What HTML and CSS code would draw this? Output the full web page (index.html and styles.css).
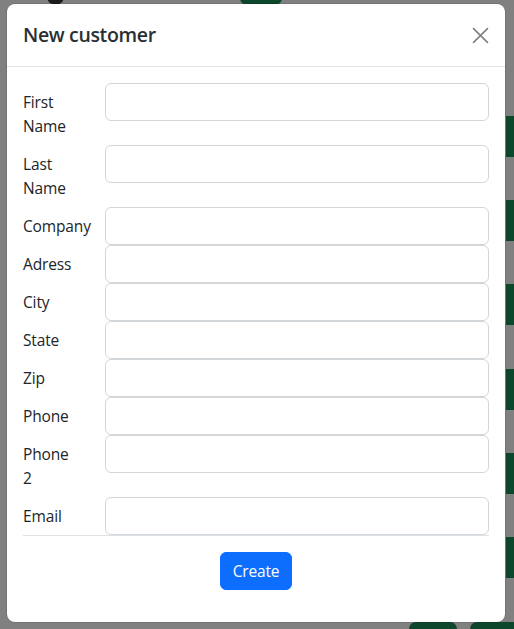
FILE: index.html
```html
<!DOCTYPE html>
<html lang="en">
<head>
<meta charset="utf-8">
<title>New customer</title>
<link rel="stylesheet" href="styles.css">
</head>
<body>
<div class="page-behind" aria-hidden="true">
  <span class="bg-avatar"></span>
  <span class="bg-pill"></span>
  <span class="bg-side s1"></span>
  <span class="bg-side s2"></span>
  <span class="bg-side s3"></span>
  <span class="bg-side s4"></span>
  <span class="bg-side s5"></span>
  <span class="bg-side s6"></span>
  <span class="bg-btn b1"></span>
  <span class="bg-btn b2"></span>
</div>

<div class="modal">
  <div class="modal-header">
    <h5 class="modal-title">New customer</h5>
    <button class="btn-close" type="button" aria-label="Close">
      <svg width="17" height="17" viewBox="0 0 16 16"><path d="M1 1L15 15M15 1L1 15" stroke="currentColor" stroke-width="1.5" fill="none"/></svg>
    </button>
  </div>
  <div class="modal-body">
    <form class="form-grid">
      <label class="form-label">First Name</label><input class="form-control" type="text">
      <label class="form-label">Last Name</label><input class="form-control" type="text">
      <label class="form-label">Company</label><input class="form-control" type="text">
      <label class="form-label">Adress</label><input class="form-control" type="text">
      <label class="form-label">City</label><input class="form-control" type="text">
      <label class="form-label">State</label><input class="form-control" type="text">
      <label class="form-label">Zip</label><input class="form-control" type="text">
      <label class="form-label">Phone</label><input class="form-control" type="text">
      <label class="form-label">Phone 2</label><input class="form-control" type="text">
      <label class="form-label">Email</label><input class="form-control" type="text">
    </form>
    <div class="actions">
      <button class="btn-primary" type="button">Create</button>
    </div>
  </div>
</div>
</body>
</html>
```

FILE: styles.css
```css
* { box-sizing: border-box; }

html, body {
  margin: 0;
  padding: 0;
}

body {
  width: 514px;
  height: 629px;
  overflow: hidden;
  background: #808080;
  font-family: "Open Sans", "Noto Sans", "Liberation Sans", sans-serif;
  font-size: 15.5px;
  letter-spacing: -0.15px;
  line-height: 24px;
  color: #212529;
  position: relative;
  padding-top: 4px;
}

/* page content seen through the backdrop */
.page-behind span { position: absolute; display: block; }
.bg-avatar {
  left: 47px; top: -12px; width: 17px; height: 17px;
  border-radius: 50%; background: #1b1b1b;
}
.bg-pill {
  left: 240px; top: -10px; width: 42px; height: 15px;
  border-radius: 7px; background: #0c462b;
}
.bg-side {
  left: 506px; width: 20px; height: 41px;
  background: #0c462b;
}
.s1 { top: 116px; }
.s2 { top: 200px; }
.s3 { top: 284px; }
.s4 { top: 369px; }
.s5 { top: 453px; }
.s6 { top: 537px; }
.bg-btn {
  top: 622px; height: 30px;
  background: #0c462b; border-radius: 7px;
}
.b1 { left: 409px; width: 48px; }
.b2 { left: 470px; width: 60px; }

/* modal */
.modal {
  position: relative;
  width: 498px;
  margin-left: 7px;
  background: #fff;
  border-radius: 8px;
  box-shadow: 0 0 0 1px rgba(0, 0, 0, 0.1);
}

.modal-header {
  display: flex;
  align-items: center;
  justify-content: space-between;
  padding: 16px;
  border-bottom: 1px solid #dee2e6;
}

.modal-title {
  margin: 0;
  font-size: 19.5px;
  line-height: 30px;
  font-weight: 600;
  letter-spacing: -0.35px;
  color: #2b2f33;
}

.btn-close {
  width: 25px;
  height: 25px;
  padding: 4px;
  margin-right: -4px;
  border: 0;
  background: transparent;
  color: #808080;
  display: flex;
  align-items: center;
  justify-content: center;
}

.modal-body {
  padding: 16px 16px 32px;
}

.form-grid {
  display: grid;
  grid-template-columns: 82px 1fr;
  border-bottom: 1px solid #dee2e6;
}

.form-label {
  width: 56px;
  padding: 7px 0;
  white-space: normal;
  overflow: visible;
}

.form-control {
  display: block;
  width: 100%;
  height: 38px;
  margin: 0;
  padding: 6px 12px;
  font: inherit;
  color: #212529;
  background: #fff;
  border: 1px solid #d3d6d9;
  border-radius: 6px;
}

.actions {
  display: flex;
  justify-content: center;
  padding-top: 16px;
}

.btn-primary {
  height: 38px;
  padding: 6px 12px;
  font: inherit;
  letter-spacing: inherit;
  color: #fff;
  background: #0d6efd;
  border: 1px solid #0d6efd;
  border-radius: 6px;
}
```
